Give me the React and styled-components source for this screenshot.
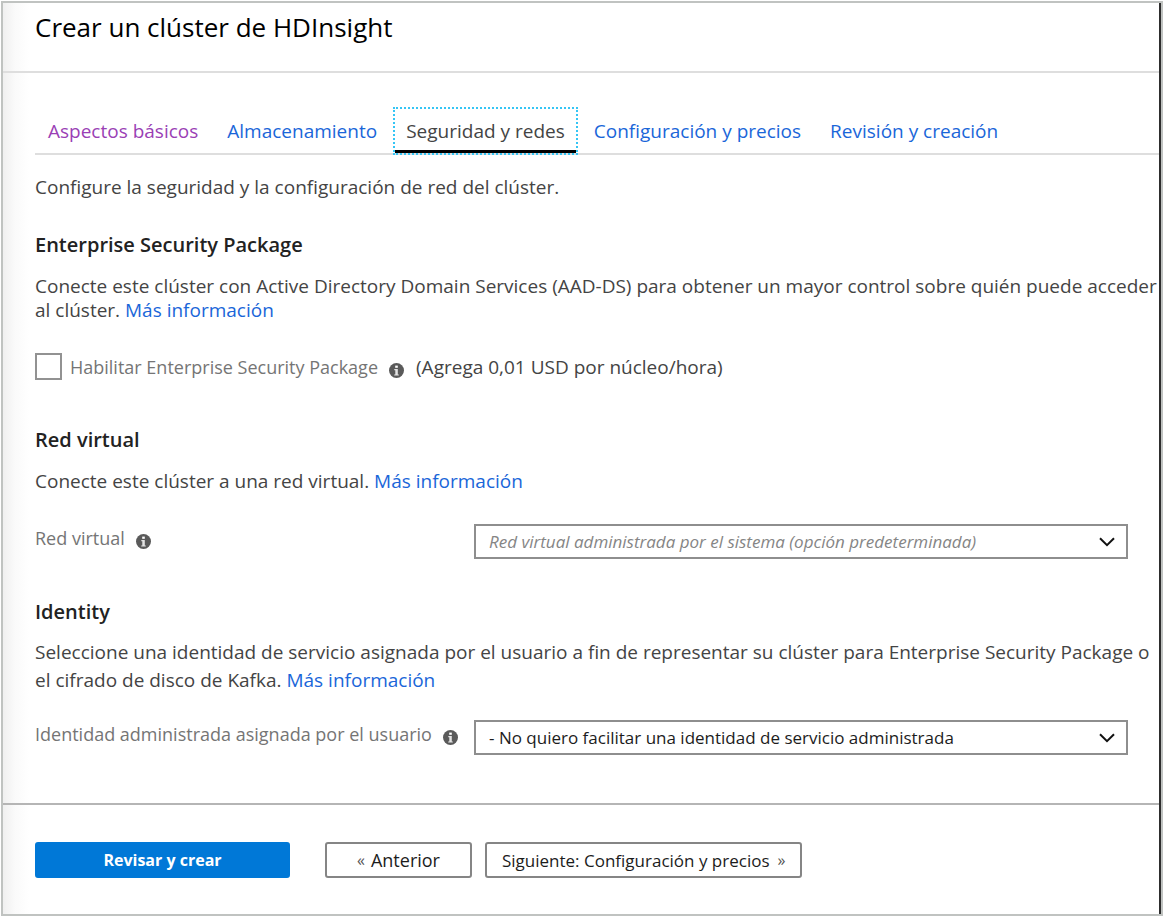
import React from 'react'
import styled, { createGlobalStyle } from 'styled-components'

const tabs = [
  { id: 'basicos', label: 'Aspectos básicos', visited: true },
  { id: 'almacenamiento', label: 'Almacenamiento' },
  { id: 'seguridad', label: 'Seguridad y redes', active: true },
  { id: 'configuracion', label: 'Configuración y precios' },
  { id: 'revision', label: 'Revisión y creación' },
]

function InfoIcon() {
  return (
    <InfoSvg width="15" height="15" viewBox="0 0 15 15" aria-hidden="true">
      <circle cx="7.5" cy="7.5" r="7.5" fill="#5a5a5a" />
      <rect x="6.2" y="2.6" width="2.6" height="2.2" fill="#fff" />
      <path d="M5.3 6h3.5v5.4h1v1.2H5.2v-1.2h1.1V7.2h-1z" fill="#e4e4e4" />
    </InfoSvg>
  )
}

function Dropdown({ id, placeholder, children }) {
  return (
    <SelectBox>
      <Select id={id} $placeholder={placeholder}>
        {children}
      </Select>
      <Chevron width="16" height="10" viewBox="0 0 16 10" aria-hidden="true">
        <path d="M1 1.2l7 7 7-7" fill="none" stroke="#111" strokeWidth="2" />
      </Chevron>
    </SelectBox>
  )
}

function App() {
  return (
    <>
      <GlobalStyle />
      <Frame>
        <Panel>
          <Header>
            <Title>Crear un clúster de HDInsight</Title>
          </Header>
          <Content>
            <Tabs>
              {tabs.map((tab) => (
                <Tab
                  key={tab.id}
                  href={`#${tab.id}`}
                  $active={tab.active}
                  $visited={tab.visited}
                  aria-current={tab.active ? 'page' : undefined}
                >
                  {tab.label}
                </Tab>
              ))}
            </Tabs>
            <Intro>Configure la seguridad y la configuración de red del clúster.</Intro>

            <Section>
              <Heading>Enterprise Security Package</Heading>
              <Text>
                Conecte este clúster con Active Directory Domain Services (AAD-DS) para obtener un
                mayor control sobre quién puede acceder al clúster.{' '}
                <Link href="#esp">Más información</Link>
              </Text>
              <CheckRow>
                <Checkbox type="checkbox" id="esp-enabled" />
                <CheckLabel htmlFor="esp-enabled">Habilitar Enterprise Security Package</CheckLabel>
                <InfoIcon />
                <Price>(Agrega 0,01 USD por núcleo/hora)</Price>
              </CheckRow>
            </Section>

            <Section>
              <Heading>Red virtual</Heading>
              <Text>
                Conecte este clúster a una red virtual. <Link href="#vnet">Más información</Link>
              </Text>
              <Field>
                <FieldName>
                  <FieldLabel htmlFor="vnet">Red virtual</FieldLabel>
                  <InfoIcon />
                </FieldName>
                <Dropdown id="vnet" placeholder>
                  <option>Red virtual administrada por el sistema (opción predeterminada)</option>
                </Dropdown>
              </Field>
            </Section>

            <Section>
              <Heading>Identity</Heading>
              <Text $loose>
                Seleccione una identidad de servicio asignada por el usuario a fin de representar su
                clúster para Enterprise Security Package o el cifrado de disco de Kafka.{' '}
                <Link href="#identity">Más información</Link>
              </Text>
              <Field $tight>
                <FieldName>
                  <FieldLabel htmlFor="identity">
                    Identidad administrada asignada por el usuario
                  </FieldLabel>
                  <InfoIcon />
                </FieldName>
                <Dropdown id="identity">
                  <option>- No quiero facilitar una identidad de servicio administrada</option>
                </Dropdown>
              </Field>
            </Section>
          </Content>
          <Footer>
            <PrimaryButton type="button">Revisar y crear</PrimaryButton>
            <ButtonGroup>
              <Button type="button" $large>
                <Arrow>«</Arrow>Anterior
              </Button>
              <Button type="button">
                Siguiente: Configuración y precios<Arrow>»</Arrow>
              </Button>
            </ButtonGroup>
          </Footer>
        </Panel>
      </Frame>
    </>
  )
}

export default App

const GlobalStyle = createGlobalStyle`
  * {
    box-sizing: border-box;
  }
  body {
    margin: 0;
    background: #fff;
    color: #444;
    font-family: 'Segoe UI', 'Open Sans', 'Noto Sans', sans-serif;
    font-size: 19px;
    line-height: 24px;
  }
  h1, h2, p {
    margin: 0;
  }
`

const Frame = styled.div`
  display: flex;
  min-height: 100vh;
  padding: 1px;
`

const Panel = styled.main`
  flex: 1;
  min-width: 0;
  display: flex;
  flex-direction: column;
  border: 2px solid #c0c3c1;
  box-shadow: inset -2px 0 #2d2d2d;
  background: linear-gradient(to right, #f0f0f0, #fafafa 12px, #fff 26px);
`

const Header = styled.header`
  height: 70px;
  margin-right: 2px;
  padding: 6px 32px;
  border-bottom: 2px solid #dedede;
`

const Title = styled.h1`
  color: #000;
  font-size: 26px;
  font-weight: 400;
  line-height: 36px;
`

const Content = styled.div`
  flex: 1;
  margin-right: 2px;
  padding: 34px 0 7px 32px;
`

const Tabs = styled.nav`
  display: flex;
  gap: 3px;
  height: 48px;
  border-bottom: 2px solid #dedede;
`

const Tab = styled.a`
  height: 48px;
  padding: 10px 11px 8px;
  border: 2px solid transparent;
  color: ${({ $visited }) => ($visited ? '#9a3fb5' : '#1a66d9')};
  text-decoration: none;
  white-space: nowrap;

  ${({ $active }) =>
    $active &&
    `
    border: 2px dotted #35c5f5;
    box-shadow: inset 0 -3px #000;
    color: #444;
  `}
`

const Intro = styled.p`
  margin-top: 20px;
`

const Section = styled.section`
  margin-top: 34px;
`

const Heading = styled.h2`
  color: #222;
  font-size: 20px;
  font-weight: 600;
  line-height: 24px;
`

const Text = styled.p`
  margin-top: ${({ $loose }) => ($loose ? '14px' : '17px')};
  line-height: ${({ $loose }) => ($loose ? '28px' : '24px')};
`

const Link = styled.a`
  color: #1a66d9;
  text-decoration: none;
`

const CheckRow = styled.div`
  display: flex;
  align-items: center;
  margin-top: 31px;
  margin-bottom: 48px;
`

const Checkbox = styled.input`
  appearance: none;
  width: 27px;
  height: 27px;
  margin: 0 8px 0 0;
  border: 2px solid #929292;
  background: #fff;

  &:checked {
    background: #0078d7;
  }
`

const CheckLabel = styled.label`
  color: #757575;
  font-size: 18px;
`

const InfoSvg = styled.svg`
  flex: none;
  margin: 8px 0 0 11px;
`

const Price = styled.span`
  margin-left: 12px;
`

const Field = styled.div`
  display: grid;
  grid-template-columns: 439px 1fr;
  margin: ${({ $tight }) => ($tight ? '26px' : '31px')} 31px 41px 0;
`

const FieldName = styled.div`
  display: flex;
  align-items: center;
  padding-bottom: 8px;
`

const FieldLabel = styled.label`
  color: #757575;
  font-size: 18px;
  white-space: nowrap;
`

const SelectBox = styled.div`
  position: relative;
`

const Select = styled.select`
  appearance: none;
  display: block;
  width: 100%;
  height: 35px;
  padding: 0 48px 0 13px;
  border: 2px solid #8e8e8e;
  border-radius: 0;
  background: #fff;
  color: ${({ $placeholder }) => ($placeholder ? '#858585' : '#1c1c1c')};
  font-family: inherit;
  font-size: 17px;
  font-style: ${({ $placeholder }) => ($placeholder ? 'italic' : 'normal')};
`

const Chevron = styled.svg`
  position: absolute;
  right: 13px;
  top: 13px;
  pointer-events: none;
`

const Footer = styled.footer`
  display: flex;
  gap: 35px;
  margin-right: 2px;
  padding: 37px 32px 36px;
  border-top: 2px solid #b5b5b5;
`

const ButtonGroup = styled.div`
  display: flex;
  gap: 13px;
`

const Button = styled.button`
  display: flex;
  align-items: center;
  justify-content: center;
  gap: ${({ $large }) => ($large ? '6px' : '8px')};
  height: 36px;
  padding: 0 ${({ $large }) => ($large ? '30px' : '15px')};
  border: 2px solid #858585;
  border-radius: 3px;
  background: #fff;
  color: #1c1c1c;
  font-family: inherit;
  font-size: ${({ $large }) => ($large ? '18px' : '17px')};
  white-space: nowrap;
`

const PrimaryButton = styled(Button)`
  width: 255px;
  border-color: #0078d7;
  background: #0078d7;
  color: #fff;
  font-size: 16px;
  font-weight: 700;
`

const Arrow = styled.span`
  color: #555;
  font-size: 16px;
`
